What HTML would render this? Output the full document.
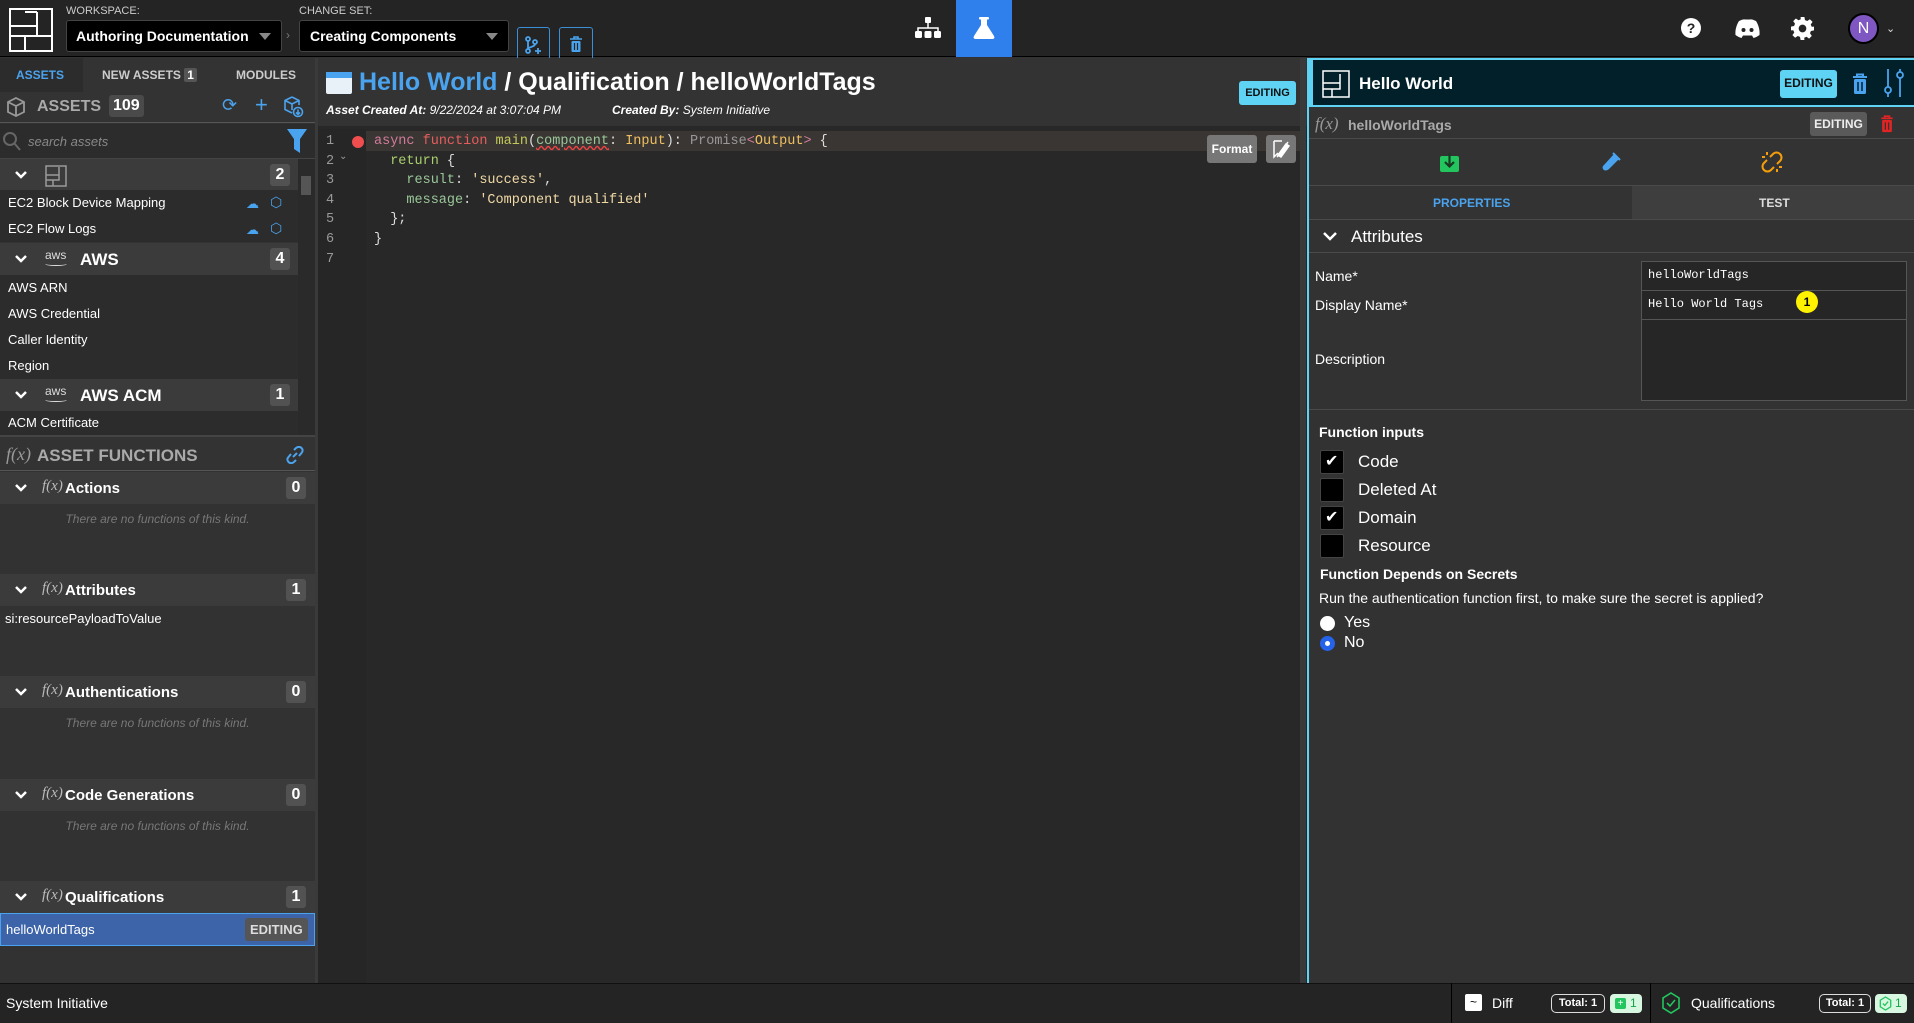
<!DOCTYPE html>
<html><head><meta charset="utf-8"><style>
*{box-sizing:border-box;margin:0;padding:0}
body{width:1914px;height:1023px;overflow:hidden;background:#323232;font-family:"Liberation Sans",sans-serif;color:#fff;position:relative}
.a{position:absolute}
.b{font-weight:bold}
.hdr{position:absolute;left:0;width:315px;background:#3b3b3b;height:32px}
.item{position:absolute;left:0;width:298px;height:26px;font-size:13px;line-height:26px;padding-left:8px;background:#2c2c2c}
.cnt{position:absolute;background:#525252;border-radius:3px;font-size:16px;font-weight:bold;width:20px;text-align:center;height:22px;line-height:22px}
.chev{position:absolute;left:14px;top:8px;width:14px;height:14px}
.fx{font-family:"Liberation Serif",serif;font-style:italic;color:#bbb}
.empty{position:absolute;left:0;width:315px;text-align:center;font-size:12px;font-style:italic;color:#777}
.code{font-family:"Liberation Mono",monospace;font-size:13.5px}
.cb{position:absolute;left:1320px;width:24px;height:24px;background:#000;border:1px solid #444;border-radius:2px}
.lbl{position:absolute;left:1358px;font-size:17px}
.badge{white-space:nowrap}
</style></head><body>
<!-- top bar -->
<div class="a" style="left:0;top:0;width:1914px;height:57px;background:#242424;border-bottom:1px solid #000"></div>
<svg class="a" style="left:9px;top:8px" width="44" height="44" viewBox="0 0 44 44" fill="none" stroke="#fff" stroke-width="2"><rect x="1" y="1" width="42" height="42"/><path d="M1 18H28V4M28 18V28H1M16 28V43M16 28H43"/><path d="M16 4H28"/></svg>
<div class="a" style="left:66px;top:5px;font-size:11px;color:#ccc">WORKSPACE:</div>
<div class="a" style="left:66px;top:20px;width:216px;height:32px;background:#000;border:1px solid #444;border-radius:3px"></div>
<div class="a b" style="left:76px;top:28px;font-size:14px">Authoring Documentation</div>
<div class="a" style="left:259px;top:33px;border:6px solid transparent;border-top:7px solid #888"></div>
<div class="a" style="left:286px;top:28px;font-size:12px;color:#777">›</div>
<div class="a" style="left:299px;top:5px;font-size:11px;color:#ccc">CHANGE SET:</div>
<div class="a" style="left:299px;top:20px;width:210px;height:32px;background:#000;border:1px solid #444;border-radius:3px"></div>
<div class="a b" style="left:310px;top:28px;font-size:14px">Creating Components</div>
<div class="a" style="left:486px;top:33px;border:6px solid transparent;border-top:7px solid #888"></div>
<div class="a" style="left:517px;top:27px;width:33px;height:36px;border:1px solid #3a8fd6;border-radius:3px"></div>
<svg class="a" style="left:525px;top:36px" width="16" height="18" viewBox="0 0 16 18" fill="none" stroke="#4aa3ee" stroke-width="1.8"><circle cx="3" cy="3" r="2"/><circle cx="3" cy="15" r="2"/><circle cx="10" cy="6" r="2"/><path d="M3 5v8M10 8c0 3-7 3-7 5M13 12v6M10 15h6"/></svg>
<div class="a" style="left:559px;top:27px;width:34px;height:36px;border:1px solid #3a8fd6;border-radius:3px"></div>
<svg class="a" style="left:569px;top:36px" width="14" height="17" viewBox="0 0 14 17"><path d="M1 3h12M5 3V1h4v2" stroke="#4aa3ee" stroke-width="1.6" fill="none"/><rect x="2.5" y="5" width="9" height="11" rx="1" fill="#4aa3ee"/><path d="M5.5 7v7M8.5 7v7" stroke="#242424" stroke-width="1.2"/></svg>
<svg class="a" style="left:915px;top:17px" width="26" height="22" viewBox="0 0 26 22" fill="#fff"><rect x="10" y="0" width="6" height="6" rx="1"/><path d="M13 6v5M3 14v-3h20v3" stroke="#fff" stroke-width="1.5" fill="none"/><rect x="0" y="14" width="7" height="7" rx="1.5"/><rect x="9.5" y="14" width="7" height="7" rx="1.5"/><rect x="19" y="14" width="7" height="7" rx="1.5"/></svg>
<div class="a" style="left:956px;top:0;width:56px;height:57px;background:#2f80ed"></div>
<svg class="a" style="left:973px;top:17px" width="22" height="22" viewBox="0 0 22 22" fill="#fff"><rect x="6" y="0" width="10" height="2.5" rx="1"/><path d="M8 2h6v6l7 11c1 2 0 3-2 3H3c-2 0-3-1-2-3l7-11z"/></svg>
<svg class="a" style="left:1680px;top:17px" width="22" height="22" viewBox="0 0 22 22"><circle cx="11" cy="11" r="10" fill="#fff"/><text x="11" y="16" text-anchor="middle" font-size="14" font-weight="bold" fill="#242424" font-family="Liberation Sans">?</text></svg>
<svg class="a" style="left:1735px;top:19px" width="25" height="19" viewBox="0 0 25 19"><path d="M4 2c3-1.5 5-2 6-1.5h5c1-.5 3 0 6 1.5 2.5 4 4 9 3.5 14-2 1.5-4 2.5-6 3l-1.5-2.5h-9L6.5 19c-2-.5-4-1.5-6-3C0 11 1.5 6 4 2z" fill="#fff"/><circle cx="8.5" cy="11" r="2" fill="#242424"/><circle cx="16.5" cy="11" r="2" fill="#242424"/></svg>
<svg class="a" style="left:1791px;top:17px" width="23" height="23" viewBox="0 0 24 24"><path fill="#fff" d="M10 0h4l.6 3.2 2.4 1 2.7-1.9 2.8 2.8-1.9 2.7 1 2.4L24 10v4l-3.2.6-1 2.4 1.9 2.7-2.8 2.8-2.7-1.9-2.4 1L14 24h-4l-.6-3.2-2.4-1-2.7 1.9-2.8-2.8 1.9-2.7-1-2.4L0 14v-4l3.2-.6 1-2.4-1.9-2.7 2.8-2.8 2.7 1.9 2.4-1z"/><circle cx="12" cy="12" r="4" fill="#242424"/></svg>
<div class="a" style="left:1848px;top:13px;width:31px;height:31px;border-radius:50%;background:#7e57c2;border:2px solid #000;font-size:16px;text-align:center;line-height:27px">N</div>
<div class="a" style="left:1886px;top:22px;font-size:11px;color:#ddd">⌄</div>

<!-- left panel -->
<div class="a" style="left:0;top:58px;width:315px;height:925px;background:#323232"></div>
<div class="a" style="left:0;top:58px;width:83px;height:34px;background:#2c2c2c"></div>
<div class="a" style="left:83px;top:58px;width:232px;height:34px;background:#333"></div>
<div class="a b" style="left:16px;top:68px;font-size:12px;color:#4aa3ee">ASSETS</div>
<div class="a b" style="left:102px;top:68px;font-size:12px;color:#ccc">NEW ASSETS <span style="background:#555;border-radius:2px;padding:0 3px;color:#fff">1</span></div>
<div class="a b" style="left:236px;top:68px;font-size:12px;color:#ccc">MODULES</div>
<div class="a" style="left:0;top:92px;width:315px;height:31px;background:#333;border-bottom:1px solid #555"></div>
<svg class="a" style="left:7px;top:97px" width="18" height="20" viewBox="0 0 18 20" fill="none" stroke="#999" stroke-width="1.8"><path d="M9 1l8 4v10l-8 4-8-4V5zM1 5l8 4 8-4M9 9v10"/></svg>
<div class="a b" style="left:37px;top:98px;font-size:16px;color:#aaa">ASSETS</div>
<div class="a b" style="left:109px;top:95px;font-size:16px;background:#4a4a4a;border-radius:3px;padding:2px 4px">109</div>
<div class="a" style="left:222px;top:95px;font-size:18px;color:#4aa3ee">⟳</div>
<div class="a" style="left:255px;top:92px;font-size:22px;color:#4aa3ee">+</div>
<svg class="a" style="left:284px;top:96px" width="20" height="22" viewBox="0 0 20 22" fill="none" stroke="#4aa3ee" stroke-width="1.6"><path d="M8 1l7 3.5V9M8 1L1 4.5v9L8 17M1 4.5 8 8l7-3.5M8 8v6"/><circle cx="14" cy="16" r="4.5"/><path d="M14 13.5v5M12 16.5l2 2 2-2"/></svg>
<div class="a" style="left:0;top:124px;width:315px;height:35px;background:#2c2c2c;border-bottom:1px solid #444"></div>
<svg class="a" style="left:3px;top:132px" width="18" height="20" viewBox="0 0 18 20" fill="none" stroke="#666" stroke-width="2"><circle cx="7" cy="7" r="6"/><path d="M11.5 11.5 17 18"/></svg>
<div class="a" style="left:28px;top:134px;font-size:13px;font-style:italic;color:#888">search assets</div>
<svg class="a" style="left:287px;top:129px" width="20" height="24" viewBox="0 0 20 24"><path d="M0 0h20l-7 10v14l-6-4V10z" fill="#4aa3ee"/></svg>

<div class="hdr" style="top:159px;width:298px"></div>
<svg class="chev" style="top:168px"><path d="M2 4l5 5 5-5" stroke="#fff" stroke-width="2.5" fill="none"/></svg>
<svg class="a" style="left:45px;top:165px" width="22" height="22" viewBox="0 0 22 22" fill="none" stroke="#999" stroke-width="1.5"><rect x="1" y="1" width="20" height="20"/><path d="M1 10h13V2M14 10v5H1M8 15v6"/></svg>
<div class="cnt" style="top:164px;left:270px">2</div>
<div class="item" style="top:190px">EC2 Block Device Mapping</div>
<div class="item" style="top:216px">EC2 Flow Logs</div>
<div class="a" style="left:246px;top:196px;font-size:13px;color:#4aa3ee">☁</div>
<div class="a" style="left:246px;top:222px;font-size:13px;color:#4aa3ee">☁</div>
<div class="a" style="left:270px;top:194px;font-size:14px;color:#4aa3ee">⬡</div>
<div class="a" style="left:270px;top:220px;font-size:14px;color:#4aa3ee">⬡</div>
<div class="hdr" style="top:243px;width:298px"></div>
<svg class="chev" style="top:252px"><path d="M2 4l5 5 5-5" stroke="#fff" stroke-width="2.5" fill="none"/></svg>
<div class="a" style="left:45px;top:248px;font-size:12px;color:#ddd">aws</div>
<div class="a" style="left:45px;top:262px;width:22px;height:4px;border-bottom:1.5px solid #ddd;border-radius:0 0 50% 50%"></div>
<div class="a b" style="left:80px;top:250px;font-size:17px">AWS</div>
<div class="cnt" style="top:248px;left:270px">4</div>
<div class="item" style="top:275px">AWS ARN</div>
<div class="item" style="top:301px">AWS Credential</div>
<div class="item" style="top:327px">Caller Identity</div>
<div class="item" style="top:353px">Region</div>
<div class="hdr" style="top:379px;width:298px"></div>
<svg class="chev" style="top:388px"><path d="M2 4l5 5 5-5" stroke="#fff" stroke-width="2.5" fill="none"/></svg>
<div class="a" style="left:45px;top:384px;font-size:12px;color:#ddd">aws</div>
<div class="a" style="left:45px;top:398px;width:22px;height:4px;border-bottom:1.5px solid #ddd;border-radius:0 0 50% 50%"></div>
<div class="a b" style="left:80px;top:386px;font-size:17px">AWS ACM</div>
<div class="cnt" style="top:384px;left:270px">1</div>
<div class="item" style="top:411px;height:24px;line-height:24px">ACM Certificate</div>
<div class="a" style="left:298px;top:159px;width:17px;height:276px;background:#2a2a2a"></div>
<div class="a" style="left:301px;top:176px;width:10px;height:19px;background:#555"></div>
<div class="a" style="left:0;top:435px;width:315px;height:2px;background:#444"></div>
<div class="a" style="left:0;top:437px;width:315px;height:34px;background:#333;border-bottom:1px solid #555"></div>
<div class="a fx" style="left:6px;top:444px;font-size:18px;color:#999">f(x)</div>
<div class="a b" style="left:37px;top:446px;font-size:17px;color:#aaa">ASSET FUNCTIONS</div>
<svg class="a" style="left:286px;top:446px" width="18" height="18" viewBox="0 0 18 18" fill="none" stroke="#4aa3ee" stroke-width="2"><path d="M7 11l4-4M8 4l2-2c2-1.5 4-1.5 5.5 0s1.5 3.5 0 5L13 10M10 14l-2 2c-2 1.5-4 1.5-5.5 0s-1.5-3.5 0-5L5 8"/></svg>

<div class="hdr" style="top:472px"></div>
<svg class="chev" style="top:481px"><path d="M2 4l5 5 5-5" stroke="#fff" stroke-width="2.5" fill="none"/></svg>
<div class="a fx" style="left:42px;top:478px;font-size:15px">f(x)</div>
<div class="a b" style="left:65px;top:480px;font-size:15px">Actions</div>
<div class="cnt" style="top:477px;left:286px">0</div>
<div class="empty" style="top:512px">There are no functions of this kind.</div>
<div class="hdr" style="top:574px"></div>
<svg class="chev" style="top:583px"><path d="M2 4l5 5 5-5" stroke="#fff" stroke-width="2.5" fill="none"/></svg>
<div class="a fx" style="left:42px;top:580px;font-size:15px">f(x)</div>
<div class="a b" style="left:65px;top:582px;font-size:15px">Attributes</div>
<div class="cnt" style="top:579px;left:286px">1</div>
<div class="a" style="left:5px;top:611px;font-size:13px">si:resourcePayloadToValue</div>
<div class="hdr" style="top:676px"></div>
<svg class="chev" style="top:685px"><path d="M2 4l5 5 5-5" stroke="#fff" stroke-width="2.5" fill="none"/></svg>
<div class="a fx" style="left:42px;top:682px;font-size:15px">f(x)</div>
<div class="a b" style="left:65px;top:684px;font-size:15px">Authentications</div>
<div class="cnt" style="top:681px;left:286px">0</div>
<div class="empty" style="top:716px">There are no functions of this kind.</div>
<div class="hdr" style="top:779px"></div>
<svg class="chev" style="top:788px"><path d="M2 4l5 5 5-5" stroke="#fff" stroke-width="2.5" fill="none"/></svg>
<div class="a fx" style="left:42px;top:785px;font-size:15px">f(x)</div>
<div class="a b" style="left:65px;top:787px;font-size:15px">Code Generations</div>
<div class="cnt" style="top:784px;left:286px">0</div>
<div class="empty" style="top:819px">There are no functions of this kind.</div>
<div class="hdr" style="top:881px"></div>
<svg class="chev" style="top:890px"><path d="M2 4l5 5 5-5" stroke="#fff" stroke-width="2.5" fill="none"/></svg>
<div class="a fx" style="left:42px;top:887px;font-size:15px">f(x)</div>
<div class="a b" style="left:65px;top:889px;font-size:15px">Qualifications</div>
<div class="cnt" style="top:886px;left:286px">1</div>
<div class="a" style="left:0;top:913px;width:315px;height:33px;background:#3d64a8;border:1px solid #4aa3ee"></div>
<div class="a" style="left:6px;top:922px;font-size:13px">helloWorldTags</div>
<div class="a b badge" style="left:245px;top:918px;font-size:13px;background:#555;border-radius:3px;padding:4px 5px;color:#ddd">EDITING</div>
<div class="a" style="left:315px;top:58px;width:3px;height:925px;background:#3a3a3a"></div>

<!-- editor -->
<div class="a" style="left:318px;top:58px;width:989px;height:68px;background:#333"></div>
<svg class="a" style="left:326px;top:72px" width="26" height="22" viewBox="0 0 26 22"><rect x="0" y="0" width="26" height="22" rx="2" fill="#e8f0f8"/><rect x="0" y="0" width="26" height="6" fill="#4aa3ee"/></svg>
<div class="a b" style="left:359px;top:68px;font-size:25px"><span style="color:#4aa3ee">Hello World</span> / Qualification / helloWorldTags</div>
<div class="a" style="left:326px;top:103px;font-size:12px;font-style:italic"><b>Asset Created At:</b> 9/22/2024 at 3:07:04 PM</div>
<div class="a" style="left:612px;top:103px;font-size:12px;font-style:italic"><b>Created By:</b> System Initiative</div>
<div class="a b badge" style="left:1239px;top:81px;width:57px;height:24px;background:#5fd3f3;border-radius:3px;color:#111;font-size:11px;text-align:center;line-height:24px">EDITING</div>
<div class="a" style="left:318px;top:126px;width:989px;height:857px;background:#282828"></div>
<div class="a" style="left:318px;top:129px;width:48px;height:854px;background:#262626"></div>
<div class="a" style="left:366px;top:131px;width:934px;height:20px;background:#3a3633"></div>
<div class="a" style="left:1300px;top:58px;width:6px;height:925px;background:#3a3a3a"></div>
<div class="a" style="left:1307px;top:58px;width:2px;height:925px;background:#5fd3f3"></div>
<div class="a code" style="left:326px;top:132px;line-height:19.6px;color:#999">1<br>2<br>3<br>4<br>5<br>6<br>7</div>
<div class="a" style="left:339px;top:151px;font-size:10px;color:#999">⌄</div>
<div class="a" style="left:352px;top:136px;width:12px;height:12px;border-radius:50%;background:#f04e4e"></div>
<pre class="a code" style="left:374px;top:132px;line-height:19.6px;color:#ddd"><span style="color:#d27b9c">async</span> <span style="color:#e75d5d">function</span> <span style="color:#c3c95a">main</span>(<span style="color:#9ac79a;text-decoration:underline wavy #e44">component</span>: <span style="color:#f0c060">Input</span>): <span style="color:#999">Promise</span><span style="color:#d27b9c">&lt;</span><span style="color:#f0c060">Output</span><span style="color:#d27b9c">&gt;</span> {
  <span style="color:#a9d06d">return</span> {
    <span style="color:#9ac79a">result</span>: <span style="color:#f0d9a6">'success'</span>,
    <span style="color:#9ac79a">message</span>: <span style="color:#f0d9a6">'Component qualified'</span>
  };
}</pre>
<div class="a b" style="left:1207px;top:135px;width:50px;height:28px;background:#777;border-radius:3px;font-size:12px;text-align:center;line-height:28px">Format</div>
<div class="a" style="left:1266px;top:135px;width:30px;height:28px;background:#777;border-radius:3px"></div>
<svg class="a" style="left:1271px;top:139px" width="20" height="20" viewBox="0 0 20 20" fill="none" stroke="#fff" stroke-width="1.5"><path d="M3 2h8M3 2v16l4-4M17 3 8 16l-2 2"/><path d="M15 5l3 2-8 11-3-2z" fill="#fff"/></svg>

<!-- right panel -->
<div class="a" style="left:1309px;top:58px;width:605px;height:49px;background:#02202a;border-top:2px solid #5fd3f3;border-bottom:2px solid #5fd3f3;border-left:4px solid #5fd3f3"></div>
<svg class="a" style="left:1322px;top:70px" width="28" height="28" viewBox="0 0 28 28" fill="none" stroke="#fff" stroke-width="1.5"><rect x="1" y="1" width="26" height="26"/><path d="M1 13h17V4M18 13v6H1M10 19v8"/></svg>
<div class="a b" style="left:1359px;top:74px;font-size:17px">Hello World</div>
<div class="a b badge" style="left:1780px;top:70px;width:57px;height:28px;background:#5fd3f3;border-radius:3px;color:#111;font-size:12px;text-align:center;line-height:27px">EDITING</div>
<svg class="a" style="left:1852px;top:73px" width="16" height="22" viewBox="0 0 16 22"><path d="M1 4h14M5 4V1.5h6V4" stroke="#4aa3ee" stroke-width="2" fill="none"/><rect x="2" y="6" width="12" height="15" rx="1.5" fill="#4aa3ee"/><path d="M6 9v9M10 9v9" stroke="#02202a" stroke-width="1.5"/></svg>
<svg class="a" style="left:1884px;top:68px" width="20" height="30" viewBox="0 0 20 30" fill="none" stroke="#4aa3ee" stroke-width="1.8"><path d="M4 1v18M4 25v4M16 1v3M16 10v19"/><circle cx="4" cy="22" r="3"/><circle cx="16" cy="7" r="3"/></svg>
<div class="a" style="left:1309px;top:107px;width:605px;height:32px;background:#333;border-bottom:1px solid #4a4a4a"></div>
<div class="a fx" style="left:1315px;top:114px;font-size:17px;color:#999">f(x)</div>
<div class="a b" style="left:1348px;top:117px;font-size:14px;color:#aaa">helloWorldTags</div>
<div class="a b badge" style="left:1810px;top:112px;width:57px;height:24px;background:#5a5a5a;border-radius:3px;font-size:12px;text-align:center;line-height:24px;color:#eee">EDITING</div>
<svg class="a" style="left:1880px;top:115px" width="14" height="18" viewBox="0 0 16 22"><path d="M1 4h14M5 4V1.5h6V4" stroke="#e02424" stroke-width="2" fill="none"/><rect x="2" y="6" width="12" height="15" rx="1.5" fill="#e02424"/><path d="M6 9v9M10 9v9" stroke="#333" stroke-width="1.5"/></svg>
<div class="a" style="left:1309px;top:139px;width:605px;height:47px;background:#333;border-bottom:1px solid #4a4a4a"></div>
<svg class="a" style="left:1440px;top:153px" width="19" height="19" viewBox="0 0 19 19"><rect x="0" y="3" width="19" height="16" rx="2" fill="#22c55e"/><path d="M9.5 0v13M5 9l4.5 4.5L14 9" stroke="#1a3a22" stroke-width="2.2" fill="none"/></svg>
<svg class="a" style="left:1601px;top:152px" width="20" height="20" viewBox="0 0 20 20"><path d="M13 2l5 5-10 10c-2 2-5 2-6 0s0-3 1-4z" fill="#4aa3ee"/><path d="M12 1l7 7" stroke="#4aa3ee" stroke-width="2"/></svg>
<svg class="a" style="left:1761px;top:151px" width="22" height="22" viewBox="0 0 22 22" fill="none" stroke="#f59e0b" stroke-width="2"><path d="M9 6l3-3c2-2 5-2 7 0s2 5 0 7l-3 3M13 16l-3 3c-2 2-5 2-7 0s-2-5 0-7l3-3M6 1v3M1 6h3M16 21v-3M21 16h-3"/></svg>
<div class="a" style="left:1309px;top:186px;width:323px;height:34px;background:#333;border-bottom:1px solid #4a4a4a"></div>
<div class="a" style="left:1632px;top:186px;width:282px;height:34px;background:#3e3e3e;border-bottom:1px solid #4a4a4a"></div>
<div class="a b" style="left:1433px;top:196px;font-size:12px;color:#4aa3ee">PROPERTIES</div>
<div class="a b" style="left:1759px;top:196px;font-size:12px;color:#ddd">TEST</div>
<div class="a" style="left:1309px;top:220px;width:605px;height:33px;border-bottom:1px solid #4a4a4a"></div>
<svg class="a" style="left:1322px;top:229px" width="16" height="14"><path d="M2 4l6 6 6-6" stroke="#fff" stroke-width="2.5" fill="none"/></svg>
<div class="a" style="left:1351px;top:227px;font-size:17px">Attributes</div>
<div class="a" style="left:1315px;top:268px;font-size:14px">Name*</div>
<div class="a" style="left:1315px;top:297px;font-size:14px">Display Name*</div>
<div class="a" style="left:1315px;top:351px;font-size:14px">Description</div>
<div class="a" style="left:1641px;top:261px;width:266px;height:140px;background:#262626;border:1px solid #555"></div>
<div class="a" style="left:1641px;top:290px;width:266px;height:1px;background:#555"></div>
<div class="a" style="left:1641px;top:319px;width:266px;height:1px;background:#555"></div>
<div class="a code" style="left:1648px;top:268px;font-size:12px">helloWorldTags</div>
<div class="a code" style="left:1648px;top:297px;font-size:12px">Hello World Tags</div>
<div class="a b" style="left:1796px;top:291px;width:22px;height:22px;border-radius:50%;background:#fff200;color:#000;font-size:12px;text-align:center;line-height:22px">1</div>
<div class="a" style="left:1309px;top:409px;width:605px;height:1px;background:#4a4a4a"></div>
<div class="a b" style="left:1319px;top:424px;font-size:14px">Function inputs</div>
<div class="cb" style="top:450px"></div><div class="a" style="left:1325px;top:451px;font-size:16px">✔</div>
<div class="cb" style="top:478px"></div>
<div class="cb" style="top:506px"></div><div class="a" style="left:1325px;top:507px;font-size:16px">✔</div>
<div class="cb" style="top:534px"></div>
<div class="lbl" style="top:452px">Code</div>
<div class="lbl" style="top:480px">Deleted At</div>
<div class="lbl" style="top:508px">Domain</div>
<div class="lbl" style="top:536px">Resource</div>
<div class="a b" style="left:1320px;top:566px;font-size:14px">Function Depends on Secrets</div>
<div class="a" style="left:1319px;top:590px;font-size:14px">Run the authentication function first, to make sure the secret is applied?</div>
<div class="a" style="left:1320px;top:616px;width:15px;height:15px;border-radius:50%;background:#fff"></div>
<div class="a" style="left:1344px;top:614px;font-size:16px">Yes</div>
<div class="a" style="left:1320px;top:636px;width:15px;height:15px;border-radius:50%;background:#2563eb"></div>
<div class="a" style="left:1325px;top:641px;width:5px;height:5px;border-radius:50%;background:#fff"></div>
<div class="a" style="left:1344px;top:634px;font-size:16px">No</div>

<!-- bottom bar -->
<div class="a" style="left:0;top:983px;width:1914px;height:40px;background:#242424;border-top:1px solid #111"></div>
<div class="a" style="left:6px;top:995px;font-size:14px">System Initiative</div>
<div class="a" style="left:1451px;top:983px;width:1px;height:40px;background:#000"></div>
<div class="a" style="left:1650px;top:983px;width:1px;height:40px;background:#000"></div>
<div class="a" style="left:1465px;top:994px;width:17px;height:17px;background:#fff;border-radius:2px;color:#000;font-size:12px;text-align:center;line-height:16px">~</div>
<div class="a" style="left:1492px;top:995px;font-size:14px">Diff</div>
<div class="a b" style="left:1551px;top:994px;width:54px;height:19px;border:1px solid #ddd;border-radius:5px;font-size:11px;text-align:center;line-height:17px">Total: 1</div>
<div class="a" style="left:1610px;top:994px;width:32px;height:19px;background:#d7f7e0;border-radius:4px"></div>
<div class="a" style="left:1615px;top:998px;width:11px;height:11px;background:#22c55e;border-radius:2px;color:#fff;font-size:10px;line-height:11px;text-align:center">+</div>
<div class="a" style="left:1630px;top:996px;font-size:12px;color:#16a34a">1</div>
<svg class="a" style="left:1661px;top:992px" width="20" height="22" viewBox="0 0 20 22" fill="none" stroke="#22c55e" stroke-width="1.6"><path d="M10 1l8 5v10l-8 5-8-5V6z"/><path d="M6 11l3 3 5-6"/></svg>
<div class="a" style="left:1691px;top:995px;font-size:14px">Qualifications</div>
<div class="a b" style="left:1819px;top:994px;width:52px;height:19px;border:1px solid #ddd;border-radius:5px;font-size:11px;text-align:center;line-height:17px">Total: 1</div>
<div class="a" style="left:1875px;top:994px;width:32px;height:19px;background:#d7f7e0;border-radius:4px"></div>
<svg class="a" style="left:1879px;top:996px" width="13" height="15" viewBox="0 0 20 22" fill="none" stroke="#22c55e" stroke-width="2"><path d="M10 1l8 5v10l-8 5-8-5V6z"/><path d="M6 11l3 3 5-6"/></svg>
<div class="a" style="left:1895px;top:996px;font-size:12px;color:#16a34a">1</div>
</body></html>
